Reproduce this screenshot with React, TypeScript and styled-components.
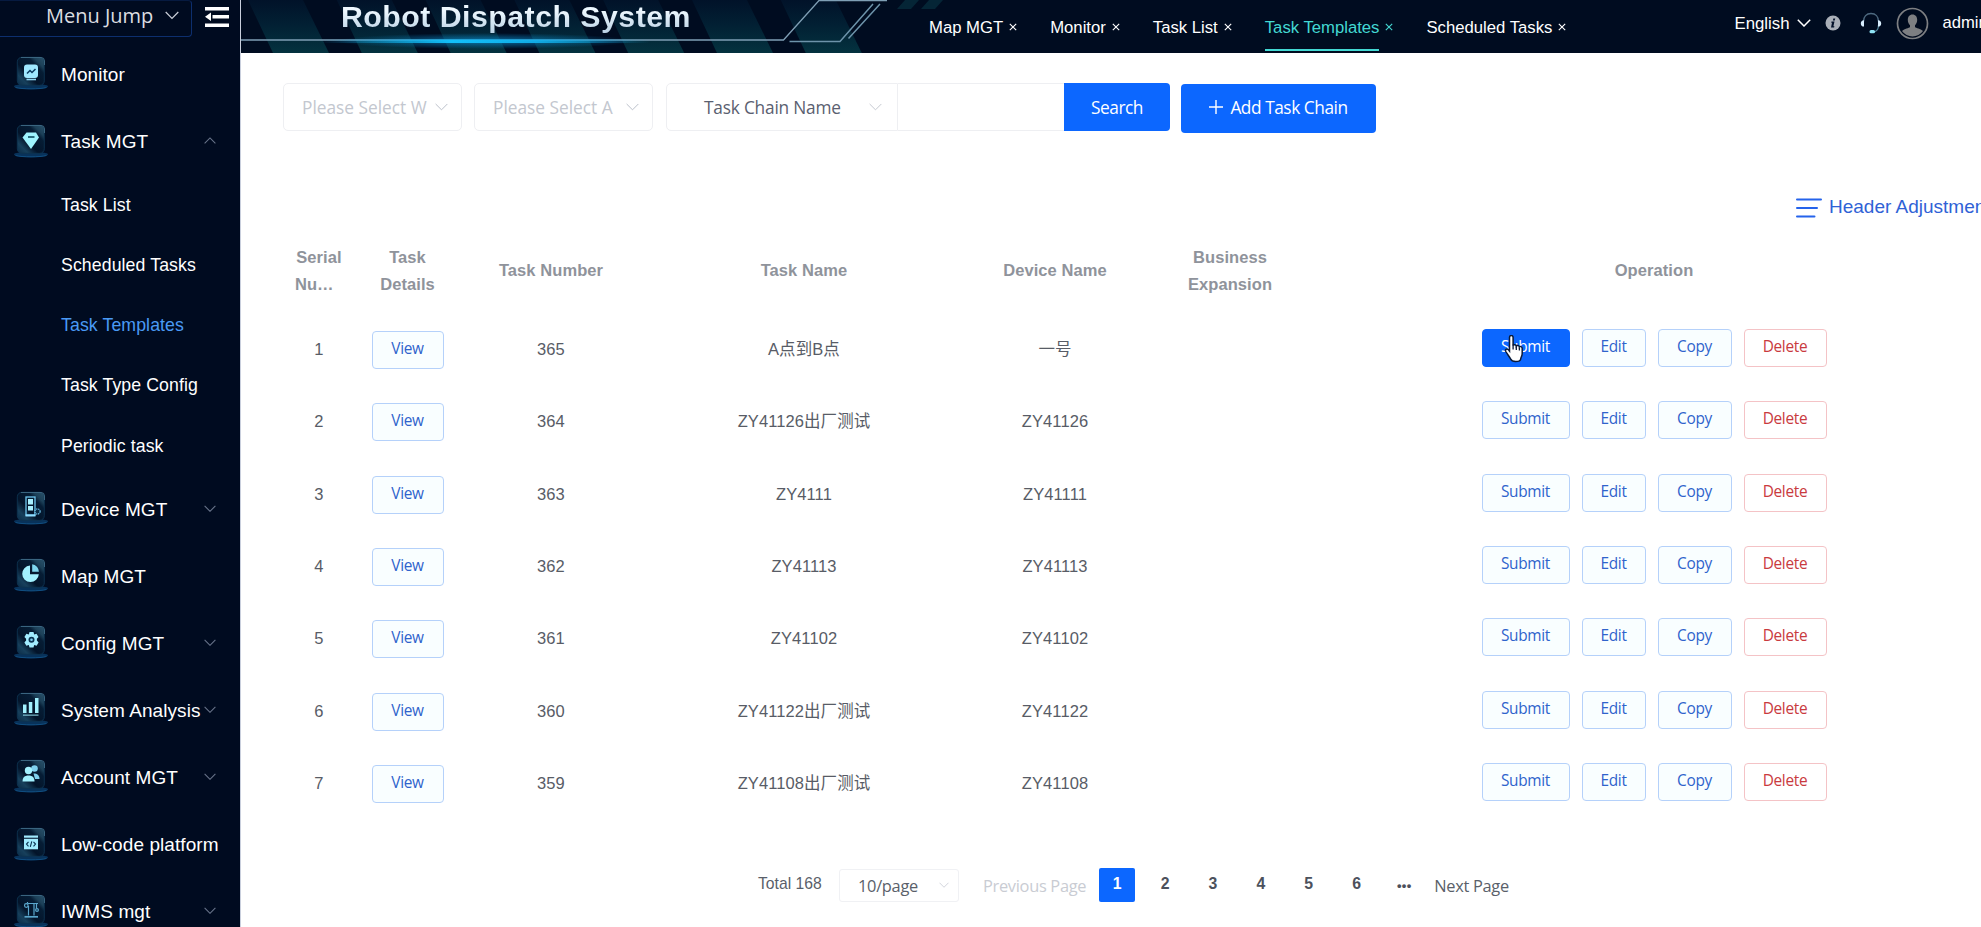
import React from "react";
import styled, { createGlobalStyle, css } from "styled-components";

const sans = `"Liberation Sans", Arial, "Noto Sans CJK SC", sans-serif`;
const humanist = `"Open Sans", "Noto Sans", "Noto Sans CJK SC", sans-serif`;

const GlobalStyle = createGlobalStyle`
  * { box-sizing: border-box; }
  html, body { margin: 0; padding: 0; background: #fff; overflow: hidden; }
  body { font-family: ${sans}; }
  button { font: inherit; margin: 0; cursor: pointer; }
`;

const Page = styled.div`
  display: flex;
  width: 100vw;
  height: 100vh;
  overflow: hidden;
`;

/* ---------- Sidebar ---------- */

const Sidebar = styled.aside`
  flex: 0 0 240px;
  height: 100%;
  overflow: hidden;
  background: #000b20;
  color: #fff;
`;

const SidebarTop = styled.div`
  display: flex;
  align-items: flex-start;
  height: 41.4px;
`;

const MenuJump = styled.div`
  display: flex;
  align-items: center;
  justify-content: space-between;
  width: 192px;
  height: 37px;
  padding: 0 12px 6px 46px;
  border: 1px solid #0d2f6e;
  border-left: 0;
  border-top-color: #061a40;
  border-radius: 0 4px 4px 0;
  font: 20px ${humanist};
  color: #dcdde0;
  white-space: nowrap;
`;

const FoldIcon = styled.svg`
  margin: 7px 0 0 13px;
`;

const NavItem = styled.div`
  display: flex;
  align-items: center;
  height: 67.1px;
  padding-left: 14px;
  font-size: 19px;
  letter-spacing: 0.08px;
  white-space: nowrap;
`;

const NavIcon = styled.svg`
  flex: none;
  margin: -3px 13px 0 0;
`;

const NavLabel = styled.span`
  width: 143px;
`;

const NavArrow = styled.span`
  display: flex;
  padding-bottom: 3px;
`;

const SubItem = styled.div<{ $active?: boolean }>`
  display: flex;
  align-items: center;
  height: 60.1px;
  padding-left: 61px;
  font-size: 17.7px;
  letter-spacing: 0.1px;
  color: ${(p) => (p.$active ? "#4a9af5" : "#fff")};
`;

/* ---------- Header ---------- */

const Main = styled.main`
  flex: 1;
  min-width: 0;
  height: 100%;
  background: #fff;
  border-left: 1px solid #c9cfdd;
  overflow: hidden;
`;

const Header = styled.header`
  position: relative;
  display: flex;
  height: 53px;
  margin-left: -1px;
  background: #000c20;
  color: #fff;
  white-space: nowrap;
  overflow: hidden;
`;

const HeaderArt = styled.svg`
  position: absolute;
  left: 0;
  top: 0;
`;

const Title = styled.h1`
  position: relative;
  flex: 0 0 689px;
  margin: 0;
  padding-left: 101px;
  font-size: 30.3px;
  line-height: 34px;
  font-weight: 700;
  letter-spacing: 0.47px;
  background: linear-gradient(#eef8ff 20%, #9dbcd6 85%);
  background-clip: text;
  -webkit-background-clip: text;
  color: transparent;
`;

const Tabs = styled.nav`
  display: flex;
  gap: 33px;
  flex: 0 0 805.5px;
`;

const Tab = styled.div<{ $active?: boolean }>`
  display: flex;
  gap: 6px;
  height: 51px;
  font-size: 16.7px;
  line-height: 56px;
  color: ${(p) => (p.$active ? "#43d8d3" : "#fff")};
`;

const TabLabel = styled.span<{ $active?: boolean }>`
  height: 51px;
  border-bottom: 2px solid ${(p) => (p.$active ? "#43d8d3" : "transparent")};
`;

const TabClose = styled.svg`
  margin-top: 23px;
`;

const UserArea = styled.div`
  display: flex;
  align-items: center;
  height: 46px;
  font-size: 16.8px;
  & > svg { flex: none; }
`;

const Language = styled.span`
  padding-top: 2px;
`;

const Admin = styled.span`
  margin-left: 14px;
  font-size: 16.6px;
`;

/* ---------- Filters ---------- */

const Filters = styled.div`
  display: flex;
  align-items: flex-start;
  padding: 30px 0 0 42px;
  font: 17.3px ${humanist};
  white-space: nowrap;
`;

const Select = styled.div`
  display: flex;
  align-items: center;
  justify-content: space-between;
  width: 179px;
  height: 48px;
  margin-right: 12px;
  padding: 0 13px 0 18px;
  border: 1px solid #eeeff2;
  border-radius: 5px;
  color: #c3c7cf;
`;

const SelectText = styled.span`
  overflow: hidden;
  width: 126px;
`;

const Combo = styled.div`
  display: flex;
  height: 48px;
  margin-left: 1px;
`;

const ComboSelect = styled.div`
  display: flex;
  align-items: center;
  justify-content: space-between;
  width: 232px;
  padding: 0 15px 0 37px;
  border: 1px solid #eeeff2;
  border-radius: 5px 0 0 5px;
  letter-spacing: -0.2px;
  color: #5a6070;
`;

const ComboInput = styled.div`
  width: 166px;
  border: solid #eeeff2;
  border-width: 1px 0;
`;

const PrimaryButton = styled.button<{ $width: number; $joined?: boolean }>`
  display: flex;
  align-items: center;
  justify-content: center;
  gap: 7px;
  width: ${(p) => p.$width}px;
  height: ${(p) => (p.$joined ? 48 : 49)}px;
  padding: 0 0 ${(p) => (p.$joined ? 0 : 3)}px;
  border: 0;
  border-radius: ${(p) => (p.$joined ? "0 4px 4px 0" : "4px")};
  background: #0c67ff;
  letter-spacing: -0.45px;
  color: #fff;
`;

const AddSlot = styled.div`
  padding: 1px 0 0 11px;
`;

const AdjustRow = styled.div`
  display: flex;
  align-items: center;
  gap: 7px;
  height: 95px;
  padding: 53px 0 0 1555px;
  font-size: 19px;
  line-height: 42px;
  color: #2f62d6;
  white-space: nowrap;
  & > svg { flex: none; margin-top: 1px; }
`;

/* ---------- Table ---------- */

const rowGrid = css`
  display: grid;
  grid-template-columns: 72px 105px 182px 324px 178px 172px 676px;
  align-items: center;
  justify-items: center;
  text-align: center;
`;

const Table = styled.div`
  width: 1709px;
  margin-left: 42px;
  font-size: 16.5px;
  letter-spacing: 0.08px;
  color: #585c66;
`;

const TableHead = styled.div`
  ${rowGrid}
  height: 86px;
  font-weight: 700;
  line-height: 27.5px;
  color: #8f939b;
`;

const TableRow = styled.div`
  ${rowGrid}
  height: 72.3px;
`;

const Cell = styled.span`
  height: 24px;
  margin-bottom: 2px;
  line-height: 24px;
`;

const Actions = styled.div`
  display: flex;
  gap: 12px;
  padding-bottom: 4px;
`;

const tones = {
  plain: css`
    background: #f9feff;
    border-color: #b5d1fa;
    color: #2f63cc;
  `,
  filled: css`
    background: #0c67ff;
    border-color: #0c67ff;
    color: #fff;
  `,
  danger: css`
    background: #fff;
    border-color: #f4c3c6;
    color: #c93a40;
  `,
};

const SmallButton = styled.button<{ $width: number; $tone?: keyof typeof tones }>`
  width: ${(p) => p.$width}px;
  height: 38px;
  padding: 0 0 3px;
  border: 1px solid;
  border-radius: 4px;
  font: 15.4px ${humanist};
  letter-spacing: -0.3px;
  ${(p) => tones[p.$tone ?? "plain"]}
`;

const HandCursor = styled.svg`
  position: absolute;
  left: 1503px;
  top: 335px;
`;

/* ---------- Pagination ---------- */

const Pagination = styled.div`
  display: flex;
  align-items: center;
  height: 34px;
  margin-top: 48px;
  padding-left: 517px;
  font: 16.4px ${humanist};
  letter-spacing: -0.3px;
  color: #5a5f6a;
  white-space: nowrap;
`;

const Total = styled.span`
  width: 81px;
  padding-bottom: 3px;
  font: 15.7px ${sans};
  letter-spacing: 0;
`;

const PageSize = styled.div`
  display: flex;
  align-items: center;
  justify-content: space-between;
  width: 120px;
  height: 33px;
  padding: 0 9px 0 18px;
  border: 1px solid #f0f1f4;
  border-radius: 3px;
`;

const PrevPage = styled.span`
  width: 116px;
  margin-left: 24px;
  color: #c9ccd3;
`;

const PageNumber = styled.span<{ $active?: boolean }>`
  display: flex;
  align-items: center;
  justify-content: center;
  width: 36px;
  height: 34px;
  margin-right: 11.9px;
  padding-bottom: 3px;
  border-radius: 2px;
  font: 700 15.8px ${sans};
  background: ${(p) => (p.$active ? "#0c67ff" : "transparent")};
  color: ${(p) => (p.$active ? "#fff" : "#4c515c")};
`;

const Ellipsis = styled(PageNumber)`
  padding-bottom: 0;
  font-size: 13px;
  letter-spacing: 0.4px;
`;

/* ---------- Drawings ---------- */

const Chevron = ({ size = 13, color, up, weight = 1.2 }: { size?: number; color: string; up?: boolean; weight?: number }) => (
  <svg width={size} height={size * 0.6} viewBox="0 0 13 8" fill="none" stroke={color} strokeWidth={weight}>
    <path d={up ? "M.5 7 6.5 1l6 6" : "M.5 1l6 6 6-6"} />
  </svg>
);

const glyphs: Record<string, React.ReactNode> = {
  monitor: (
    <>
      <rect x="10" y="8.5" width="14" height="13.5" rx="3" fill="#9fe8ff" />
      <path d="M13 17.500l3-3 2 2 3.500-3.500" stroke="#0a3a60" strokeWidth="1.500" fill="none" />
      <path d="M12.500 23.500h9.500" stroke="#8fd8f4" strokeWidth="1.600" />
    </>
  ),
  diamond: (
    <>
      <path d="M12.500 8.500h9.500l3 5-8 11.500-8.500-11.500z" fill="#9ff4ff" />
      <path d="M14 13h6.500" stroke="#0a4a60" strokeWidth="1.600" />
    </>
  ),
  device: (
    <>
      <rect x="12" y="6" width="9" height="18" fill="none" stroke="#6fc6ee" strokeWidth="1.300" />
      <rect x="14" y="8" width="5" height="5.500" fill="#a8f0ff" />
      <rect x="14" y="15" width="5" height="4.500" fill="#a8f0ff" />
      <path d="M11.500 24.500h10" stroke="#8fdcff" strokeWidth="2" />
      <circle cx="23.500" cy="20.500" r="2.600" fill="#0a2a45" stroke="#6fc6ee" strokeWidth="1.200" strokeDasharray="1.300 .8" />
    </>
  ),
  pie: (
    <>
      <path d="M16 7.500v8.700h8.800A8.300 8.300 0 1 1 16 7.500z" fill="#a2f1ff" />
      <path d="M18.200 6.200a7.800 7.800 0 0 1 6.700 7.600h-6.700z" fill="#7fd6ee" />
    </>
  ),
  gear: (
    <>
      <path
        d="M15.500 7h4l.7 2.400 2.300-.7 2 3.300-1.600 1.800 0 1.800 1.700 1.800-2 3.400-2.400-.7-.7 2.400h-4l-.7-2.400-2.400.7-2-3.400 1.700-1.800v-1.800L10.400 12l2-3.300 2.400.7z"
        fill="#a2ecff"
      />
      <circle cx="17.500" cy="14.700" r="3" fill="#0a3352" />
      <circle cx="17.500" cy="14.700" r="1.300" fill="#7fcdf0" />
    </>
  ),
  bars: (
    <g fill="#a2f1ff">
      <rect x="9" y="12.500" width="3.500" height="8.500" />
      <rect x="14.800" y="10" width="3.500" height="11" />
      <rect x="21" y="6" width="3.500" height="15" />
      <rect x="9" y="22.500" width="15.500" height="1.300" opacity=".7" />
    </g>
  ),
  people: (
    <>
      <circle cx="20.500" cy="9.500" r="3.300" fill="#7fd0ee" />
      <path d="M19.500 14.500c4 0 6 2 6 5.500h-4.500z" fill="#7fd0ee" />
      <circle cx="14.500" cy="11.500" r="3.700" fill="#a2f1ff" />
      <path d="M8.500 22.500c0-4 2-6 6-6s6 2 6 6z" fill="#a2f1ff" />
    </>
  ),
  code: (
    <>
      <rect x="10" y="8.500" width="14" height="2.200" fill="#a2ecff" />
      <rect x="10" y="11.800" width="14" height="10.500" fill="#a2ecff" />
      <path d="M14.500 14.800l-2 2.300 2 2.300M19.500 14.800l2 2.300-2 2.300M17.800 14.300l-1.500 5.600" stroke="#0a3352" strokeWidth="1.100" fill="none" />
    </>
  ),
  robot: (
    <g fill="none" stroke="#5aa6cc" strokeWidth="1.200">
      <path d="M13.500 9.500H24M13.500 9.500v-1.500M22.500 9.500v5M14.500 12v9.500M20 10v11.500" />
      <circle cx="12.300" cy="11.500" r="1.800" />
      <circle cx="23" cy="16" r="1.400" />
      <path d="M10.500 22.800h13.500" strokeWidth="1.700" />
    </g>
  ),
};

const MenuIcon = ({ name }: { name: string }) => (
  <NavIcon width="34" height="34" viewBox="0 0 34 34">
    <defs>
      <linearGradient id={`tile-${name}`} x1="0" y1="1" x2="1" y2="0">
        <stop offset="0" stopColor="#0b2c48" />
        <stop offset=".2" stopColor="#17405c" />
        <stop offset=".4" stopColor="#03142a" />
        <stop offset=".7" stopColor="#061d35" />
        <stop offset=".8" stopColor="#1c4058" />
        <stop offset="1" stopColor="#2a536c" />
      </linearGradient>
    </defs>
    <ellipse cx="17" cy="30.500" rx="17" ry="2.700" fill="#08325a" />
    <path d="M1.500 31.500c6 1.800 25 1.800 31 0" stroke="#125388" strokeWidth=".9" fill="none" />
    <rect x="3.300" y="1.300" width="27" height="28" rx="4.500" fill={`url(#tile-${name})`} stroke="#0d3350" strokeWidth=".9" />
    <path d="M7 1.500h20a3.500 3.500 0 0 1 3.500 3.500v4" stroke="#3f6b86" strokeWidth=".9" fill="none" />
    {glyphs[name]}
  </NavIcon>
);

const stripes = [0, 1, 2, 3, 4, 5, 6];

const HeaderDecoration = () => (
  <HeaderArt width="720" height="53" viewBox="0 0 720 53" fill="none">
    <defs>
      <linearGradient id="stripe" x1="0" y1="0" x2="0" y2="1">
        <stop offset="0" stopColor="#011229" />
        <stop offset=".5" stopColor="#022134" />
        <stop offset="1" stopColor="#04323f" />
      </linearGradient>
      <linearGradient id="beam" x1="0" y1="0" x2="1" y2="0">
        <stop offset="0" stopColor="#12b4f0" stopOpacity="0" />
        <stop offset=".4" stopColor="#12c0fa" />
        <stop offset=".65" stopColor="#12b4f0" stopOpacity=".9" />
        <stop offset="1" stopColor="#12b4f0" stopOpacity="0" />
      </linearGradient>
      <radialGradient id="halo">
        <stop offset="0" stopColor="#0a86c4" stopOpacity=".8" />
        <stop offset="1" stopColor="#0a86c4" stopOpacity="0" />
      </radialGradient>
    </defs>
    {stripes.map((i) => (
      <path key={i} d={`M${8 + i * 88.8} 0h55l26 53h-56z`} fill="url(#stripe)" />
    ))}
    <path d="M0 40h543.500L579 0.500h68" stroke="#7f9fb5" strokeWidth="1.300" />
    <path d="M549.500 41.500H600L633 4M608.500 38.500 640 4" stroke="#6d93aa" strokeWidth="1.500" />
    <path d="M665 0h14l-8 9h-14zM689 0h14l-8 9h-14z" fill="#052536" />
    <ellipse cx="245" cy="41" rx="150" ry="8" fill="url(#halo)" />
    <rect x="80" y="39.500" width="330" height="3.500" rx="1.500" fill="url(#beam)" />
  </HeaderArt>
);

/* ---------- Content ---------- */

type NavEntry = { label: string; icon: string; arrow?: "up" | "down"; children?: string[] };

const nav: NavEntry[] = [
  { label: "Monitor", icon: "monitor" },
  {
    label: "Task MGT",
    icon: "diamond",
    arrow: "up",
    children: ["Task List", "Scheduled Tasks", "Task Templates", "Task Type Config", "Periodic task"],
  },
  { label: "Device MGT", icon: "device", arrow: "down" },
  { label: "Map MGT", icon: "pie" },
  { label: "Config MGT", icon: "gear", arrow: "down" },
  { label: "System Analysis", icon: "bars", arrow: "down" },
  { label: "Account MGT", icon: "people", arrow: "down" },
  { label: "Low-code platform", icon: "code" },
  { label: "IWMS mgt", icon: "robot", arrow: "down" },
];

const tabs = ["Map MGT", "Monitor", "Task List", "Task Templates", "Scheduled Tasks"];

const rows = [
  ["365", "A点到B点", "一号"],
  ["364", "ZY41126出厂测试", "ZY41126"],
  ["363", "ZY4111", "ZY41111"],
  ["362", "ZY41113", "ZY41113"],
  ["361", "ZY41102", "ZY41102"],
  ["360", "ZY41122出厂测试", "ZY41122"],
  ["359", "ZY41108出厂测试", "ZY41108"],
];

export default function App() {
  return (
    <Page>
      <GlobalStyle />
      <Sidebar>
        <SidebarTop>
          <MenuJump>
            Menu Jump
            <Chevron color="#c9ced8" size={14} />
          </MenuJump>
          <FoldIcon width="24" height="20" viewBox="0 0 24 20" fill="#fff">
            <path d="M0 0h24v3.500H0zM7.500 8H24v3.500H7.500zM0 16.500h24V20H0zM0 9.800l6-4.300v8.600z" />
          </FoldIcon>
        </SidebarTop>
        {nav.map((item) => (
          <React.Fragment key={item.label}>
            <NavItem>
              <MenuIcon name={item.icon} />
              <NavLabel>{item.label}</NavLabel>
              {item.arrow && (
                <NavArrow>
                  <Chevron color="#68748a" size={12} up={item.arrow === "up"} />
                </NavArrow>
              )}
            </NavItem>
            {item.children?.map((c) => (
              <SubItem key={c} $active={c === "Task Templates"}>
                {c}
              </SubItem>
            ))}
          </React.Fragment>
        ))}
      </Sidebar>

      <Main>
        <Header>
          <HeaderDecoration />
          <Title>Robot Dispatch System</Title>
          <Tabs>
            {tabs.map((t) => {
              const active = t === "Task Templates";
              return (
                <Tab key={t} $active={active}>
                  <TabLabel $active={active}>{t}</TabLabel>
                  <TabClose width="8" height="8" viewBox="0 0 8 8" stroke="currentColor" strokeWidth="1.100">
                    <path d="M.8.8l6.400 6.400M7.200.8.8 7.200" />
                  </TabClose>
                </Tab>
              );
            })}
          </Tabs>
          <UserArea>
            <Language>English</Language>
            <svg width="14" height="8" viewBox="0 0 14 8" fill="none" stroke="#fff" strokeWidth="1.500" style={{ marginLeft: 7 }}>
              <path d="M.8.8 7 7 13.200.8" />
            </svg>
            <svg width="16" height="16" viewBox="0 0 16 16" style={{ marginLeft: 14 }}>
              <circle cx="8" cy="8" r="7.500" fill="#a9afb8" />
              <path d="M8.300 3.600h1.900l-.4 1.900H7.900zM6.500 6.600h3l-1.100 4.600h1l-.3 1.200H6l1-4.600H6.200z" fill="#04122a" />
            </svg>
            <svg width="22" height="22" viewBox="0 0 22 22" fill="none" style={{ marginLeft: 19 }}>
              <path d="M3.500 9.500C3.500 4.500 6.500 1.500 11 1.500s7.500 3 7.500 8" stroke="#4d6a80" strokeWidth="1.400" />
              <path d="M18.500 13c0 4-1.500 6.500-5 7" stroke="#4d7f95" strokeWidth="1.300" />
              <path d="M4 8.200v6.400C1.800 14.500.8 13 .8 11.400S1.800 8.400 4 8.200zM18 8.200v6.400c2.200-.1 3.200-1.600 3.200-3.200S20.200 8.400 18 8.200z" fill="#d9efff" />
              <rect x="9.500" y="18" width="5.500" height="3.200" rx="1.500" fill="#8fe4f5" />
            </svg>
            <svg width="33" height="33" viewBox="0 0 33 33" style={{ marginLeft: 14 }}>
              <circle cx="16.500" cy="16.500" r="15" fill="#000b1e" stroke="#7d7f82" strokeWidth="1.700" />
              <path d="M16.500 7.500c3 0 4.700 2.300 4.700 5.200 0 2.400-1 4.400-2.200 5.500v1.900c1 1.300 5.500 1.700 8 3.900a12.900 12.900 0 0 1-21 0c2.500-2.200 7-2.600 8-3.900v-1.900c-1.200-1.100-2.200-3.100-2.200-5.500 0-2.900 1.700-5.200 4.700-5.200z" fill="#7d7f82" />
            </svg>
            <Admin>admin</Admin>
          </UserArea>
        </Header>

        <Filters>
          <Select>
            <SelectText>Please Select W</SelectText>
            <Chevron color="#b9bec8" weight={1} />
          </Select>
          <Select>
            <SelectText>Please Select A</SelectText>
            <Chevron color="#b9bec8" weight={1} />
          </Select>
          <Combo>
            <ComboSelect>
              Task Chain Name
              <Chevron color="#c3c7d0" weight={1} />
            </ComboSelect>
            <ComboInput />
            <PrimaryButton $width={106} $joined>
              Search
            </PrimaryButton>
          </Combo>
          <AddSlot>
            <PrimaryButton $width={195}>
              <svg width="14" height="14" viewBox="0 0 14 14" stroke="#fff" strokeWidth="1.400">
                <path d="M7 0v14M0 7h14" />
              </svg>
              Add Task Chain
            </PrimaryButton>
          </AddSlot>
        </Filters>

        <AdjustRow>
          <svg width="26" height="20" viewBox="0 0 26 20" stroke="#2563eb" strokeWidth="2" strokeLinecap="round">
            <path d="M1 1.500h24M1 10h20M1 18.500h17.500" />
          </svg>
          <span>Header Adjustment</span>
        </AdjustRow>

        <Table>
          <TableHead>
            <span>
              Serial
              <br />
              Nu…&nbsp;&nbsp;
            </span>
            <span>
              Task
              <br />
              Details
            </span>
            <span>Task Number</span>
            <span>Task Name</span>
            <span>Device Name</span>
            <span>
              Business
              <br />
              Expansion
            </span>
            <span>Operation</span>
          </TableHead>
          {rows.map(([num, name, device], i) => (
            <TableRow key={num}>
              <Cell>{i + 1}</Cell>
              <SmallButton $width={72}>View</SmallButton>
              <Cell>{num}</Cell>
              <Cell>{name}</Cell>
              <Cell>{device}</Cell>
              <Cell />
              <Actions>
                <SmallButton $width={88} $tone={i === 0 ? "filled" : "plain"}>
                  Submit
                </SmallButton>
                <SmallButton $width={64}>Edit</SmallButton>
                <SmallButton $width={74}>Copy</SmallButton>
                <SmallButton $width={83} $tone="danger">
                  Delete
                </SmallButton>
              </Actions>
            </TableRow>
          ))}
        </Table>

        <Pagination>
          <Total>Total 168</Total>
          <PageSize>
            10/page
            <Chevron color="#c3c7d0" size={10} weight={1} />
          </PageSize>
          <PrevPage>Previous Page</PrevPage>
          {["1", "2", "3", "4", "5", "6"].map((n) => (
            <PageNumber key={n} $active={n === "1"}>
              {n}
            </PageNumber>
          ))}
          <Ellipsis>•••</Ellipsis>
          <span>Next Page</span>
        </Pagination>
      </Main>

      <HandCursor width="22" height="28" viewBox="0 0 22 28">
        <path
          d="M6.500 2.500c0-1.300.9-2 1.800-2s1.800.7 1.800 2v8c.3-1 3-.9 3.200.6.500-1 2.900-.8 3.100.8.600-.8 2.800-.5 2.800 1.500v5.100c0 2.500-1.200 3.500-1.500 5.500-.2 1.800-1.800 2.500-5.200 2.500-3.800 0-4.300-1.200-5-2.700-.9-2-3.200-4.600-4.700-7.300-1-2 .8-3.200 2.300-2 .600.500 1.100 1.200 1.400 1.600z"
          fill="#fff"
          stroke="#0a1a38"
          strokeWidth="1.500"
        />
        <path d="M10.100 9.500v5M13.300 11.500v3.500M16.400 12.500v3" stroke="#0a1a38" strokeWidth="1.300" fill="none" />
      </HandCursor>
    </Page>
  );
}
